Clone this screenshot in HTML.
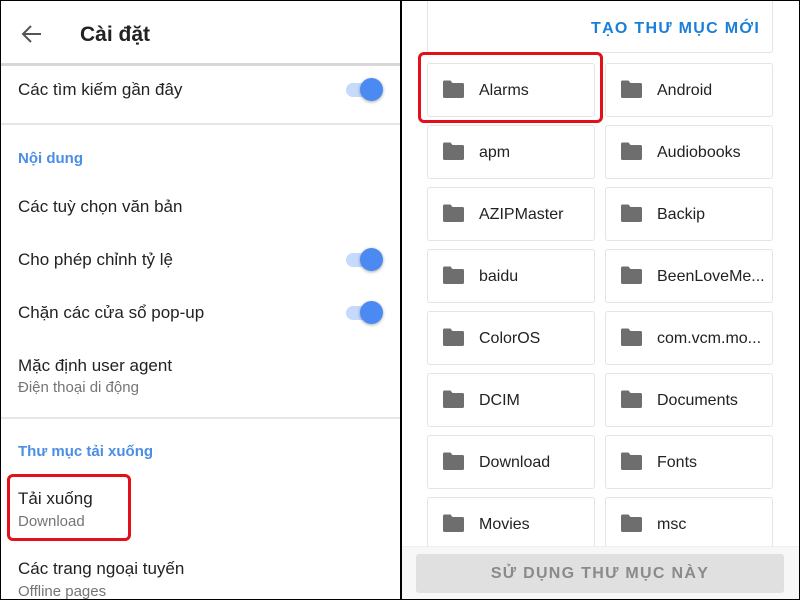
<!DOCTYPE html>
<html><head><meta charset="utf-8"><style>
*{margin:0;padding:0;box-sizing:border-box}
body{width:800px;height:600px;overflow:hidden;background:#fff;font-family:"Liberation Sans",Roboto,sans-serif;position:relative;color:#212121}
.frame{position:absolute;left:0;top:0;width:800px;height:600px;border:1px solid #000;z-index:10;pointer-events:none}
.div{position:absolute;left:400px;top:0;width:2px;height:600px;background:#000;z-index:10}
.a{position:absolute;white-space:nowrap}
.t{font-size:17px;color:#222}
.s{font-size:15px;color:#757575}
.h{font-size:15px;color:#4a8ee6;font-weight:bold}
.hr{position:absolute;left:0;width:400px;height:2px;background:#e6e6e6}
.tr{position:absolute;left:346px;width:34px;height:14px;border-radius:7px;background:#c6dafc}
.kn{position:absolute;left:360px;width:23px;height:23px;border-radius:50%;background:#4b8af2;box-shadow:0 1px 3px rgba(0,0,0,.35)}
.card{position:absolute;width:168px;height:54px;border:1px solid #e4e4e4;border-radius:3px;background:#fff}
.card svg{position:absolute;left:14px;top:16px}
.card span{position:absolute;left:51px;top:18px;font-size:16px;color:#222}
.red{position:absolute;border:3px solid #e3101a;border-radius:6px}
</style></head><body>
<div class="frame"></div><div class="div"></div>
<!-- left -->
<svg class="a" style="left:20px;top:23px" width="24" height="22" viewBox="0 0 24 22"><path d="M21 11H4M11 3L3 11l8 8" stroke="#555" stroke-width="2" fill="none"/></svg>
<div class="a" style="left:80px;top:23px;font-size:21px;font-weight:bold;color:#222">Cài đặt</div>
<div class="hr" style="top:63px;height:3px;background:#d8d8d8"></div>
<div class="a t" style="left:18px;top:80px">Các tìm kiếm gần đây</div>
<div class="tr" style="top:83px"></div><div class="kn" style="top:78px"></div>
<div class="hr" style="top:123px"></div>
<div class="a h" style="left:18px;top:150px">Nội dung</div>
<div class="a t" style="left:18px;top:197px">Các tuỳ chọn văn bản</div>
<div class="a t" style="left:18px;top:250px">Cho phép chỉnh tỷ lệ</div>
<div class="tr" style="top:253px"></div><div class="kn" style="top:248px"></div>
<div class="a t" style="left:18px;top:303px">Chặn các cửa sổ pop-up</div>
<div class="tr" style="top:306px"></div><div class="kn" style="top:301px"></div>
<div class="a t" style="left:18px;top:356px">Mặc định user agent</div>
<div class="a s" style="left:18px;top:379px">Điện thoại di động</div>
<div class="hr" style="top:417px"></div>
<div class="a h" style="left:18px;top:443px">Thư mục tải xuống</div>
<div class="a t" style="left:18px;top:489px">Tải xuống</div>
<div class="a s" style="left:18px;top:513px">Download</div>
<div class="red" style="left:7px;top:474px;width:124px;height:67px"></div>
<div class="a t" style="left:18px;top:559px">Các trang ngoại tuyến</div>
<div class="a s" style="left:18px;top:583px">Offline pages</div>
<!-- right -->
<div class="card" style="left:427px;top:-4px;width:346px;height:57px"></div>
<div class="a" style="left:591px;top:20px;font-size:16px;font-weight:bold;color:#1a7fd6;letter-spacing:1.3px">TẠO THƯ MỤC MỚI</div>
<div id="g"></div>
<div class="red" style="left:418px;top:52px;width:185px;height:71px"></div>
<div class="a" style="left:402px;top:546px;width:397px;height:53px;background:#f7f7f7;border-top:1px solid #eee"></div>
<div class="a" style="left:416px;top:554px;width:368px;height:39px;background:#e0e0e0;border-radius:3px;text-align:center;line-height:40px;font-size:16px;font-weight:bold;color:#8a8a8a;letter-spacing:1.3px">SỬ DỤNG THƯ MỤC NÀY</div>
<script>
var n=["Alarms","Android","apm","Audiobooks","AZIPMaster","Backip","baidu","BeenLoveMe...","ColorOS","com.vcm.mo...","DCIM","Documents","Download","Fonts","Movies","msc"];
var h="";for(var i=0;i<16;i++){var x=i%2?605:427,y=63+Math.floor(i/2)*62;
h+='<div class="card" style="left:'+x+'px;top:'+y+'px"><svg width="23" height="19" viewBox="0 0 23 19"><path d="M1 2a1.5 1.5 0 0 1 1.5-1.5h6l2 2.5h10a1.5 1.5 0 0 1 1.5 1.5v12a1.5 1.5 0 0 1-1.5 1.5h-18A1.5 1.5 0 0 1 1 16.5z" fill="#6e6e6e"/></svg><span>'+n[i]+'</span></div>';}
document.getElementById("g").innerHTML=h;
</script>
</body></html>
